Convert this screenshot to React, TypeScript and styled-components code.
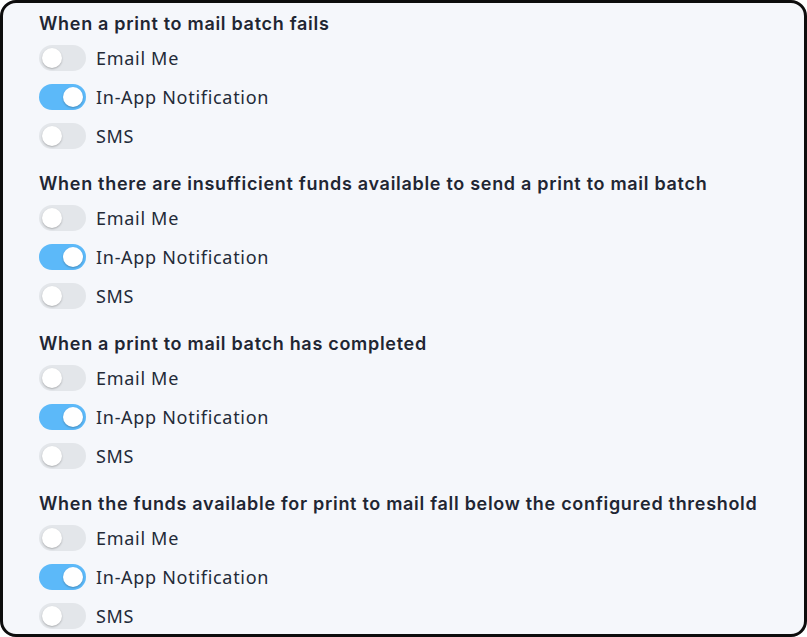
import styled, { createGlobalStyle } from "styled-components";

const GlobalStyle = createGlobalStyle`
  html, body {
    margin: 0;
    padding: 0;
    background: #ffffff;
  }
  * {
    box-sizing: border-box;
  }
`;

const Frame = styled.div`
  width: 807px;
  height: 637px;
  border: 3px solid #0d0d0d;
  border-radius: 16px;
  background: #f5f7fb;
  padding: 9px 0 0 36px;
  overflow: hidden;
  display: flex;
  flex-direction: column;
  gap: 23px;
`;

const Section = styled.section`
  display: flex;
  flex-direction: column;
`;

const Heading = styled.h3`
  margin: 0 0 9px;
  font-family: Inter, "Noto Sans", sans-serif;
  font-weight: 600;
  font-size: 18px;
  line-height: 24px;
  letter-spacing: 0.7px;
  color: #1f2633;
`;

const Options = styled.div`
  display: flex;
  flex-direction: column;
  gap: 13px;
`;

const Row = styled.label`
  display: flex;
  align-items: center;
  gap: 10px;
  height: 26px;
`;

const Track = styled.span<{ $on: boolean }>`
  position: relative;
  width: 47px;
  height: 26px;
  border-radius: 13px;
  background: ${(p) => (p.$on ? "#5cb9f9" : "#e3e6ea")};
  flex-shrink: 0;
`;

const Knob = styled.span<{ $on: boolean }>`
  position: absolute;
  top: 3px;
  left: ${(p) => (p.$on ? "24px" : "3px")};
  width: 20px;
  height: 20px;
  border-radius: 50%;
  background: #ffffff;
  box-shadow: 0 1px 2px rgba(0, 0, 0, 0.25);
`;

const Label = styled.span`
  font-family: "Noto Sans", Inter, sans-serif;
  font-size: 18px;
  letter-spacing: 0.7px;
  color: #232a38;
`;

type Section = { title: string };

const sections: Section[] = [
  { title: "When a print to mail batch fails" },
  { title: "When there are insufficient funds available to send a print to mail batch" },
  { title: "When a print to mail batch has completed" },
  { title: "When the funds available for print to mail fall below the configured threshold" },
];

const options = [
  { label: "Email Me", on: false },
  { label: "In-App Notification", on: true },
  { label: "SMS", on: false },
];

const Toggle = ({ on }: { on: boolean }) => (
  <Track $on={on}>
    <Knob $on={on} />
  </Track>
);

export default function App() {
  return (
    <>
      <GlobalStyle />
      <Frame>
        {sections.map((s) => (
          <Section key={s.title}>
            <Heading>{s.title}</Heading>
            <Options>
              {options.map((o) => (
                <Row key={o.label}>
                  <Toggle on={o.on} />
                  <Label>{o.label}</Label>
                </Row>
              ))}
            </Options>
          </Section>
        ))}
      </Frame>
    </>
  );
}
